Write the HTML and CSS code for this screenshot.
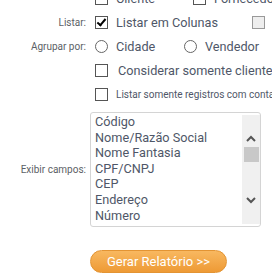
FILE: index.html
```html
<!DOCTYPE html>
<html lang="pt-BR">
<head>
    <meta charset="UTF-8">
    <title>Relatório</title>
    <link rel="stylesheet" href="styles.css">
</head>
<body>
    <div class="form">
        <div class="row row-top">
            <span class="label"></span>
            <div class="field">
                <label class="choice w-cliente"><span class="check"></span><span class="opt">Cliente</span></label>
                <label class="choice"><span class="check"></span><span class="opt">Fornecedor</span></label>
            </div>
        </div>
        <div class="row">
            <span class="label">Listar:</span>
            <div class="field">
                <label class="choice w-colunas"><span class="check checked"></span><span class="opt">Listar em Colunas</span></label>
                <label class="choice"><span class="check disabled"></span><span class="opt">Totalizar</span></label>
            </div>
        </div>
        <div class="row">
            <span class="label">Agrupar por:</span>
            <div class="field">
                <label class="choice w-cidade"><span class="radio"></span><span class="opt">Cidade</span></label>
                <label class="choice"><span class="radio"></span><span class="opt">Vendedor</span></label>
            </div>
        </div>
        <div class="row">
            <span class="label"></span>
            <div class="field">
                <label class="choice"><span class="check"></span><span class="opt opt-pad">Considerar somente clientes ativos</span></label>
            </div>
        </div>
        <div class="row">
            <span class="label"></span>
            <div class="field">
                <label class="choice"><span class="check"></span><span class="opt small">Listar somente registros com contato</span></label>
            </div>
        </div>
        <div class="row row-list">
            <span class="label">Exibir campos:</span>
            <div class="listbox">
                <ul class="items">
                    <li>Código</li>
                    <li>Nome/Razão Social</li>
                    <li>Nome Fantasia</li>
                    <li>CPF/CNPJ</li>
                    <li>CEP</li>
                    <li>Endereço</li>
                    <li>Número</li>
                </ul>
                <div class="scrollbar">
                    <svg class="arrow" width="10" height="7" viewBox="0 0 10 7"><path d="M1 6 L5 2 L9 6" fill="none" stroke="#555" stroke-width="2"/></svg>
                    <span class="thumb"></span>
                    <span class="spacer"></span>
                    <svg class="arrow" width="10" height="7" viewBox="0 0 10 7"><path d="M1 1 L5 5 L9 1" fill="none" stroke="#555" stroke-width="2"/></svg>
                </div>
            </div>
        </div>
        <div class="row row-button">
            <span class="label"></span>
            <button class="btn">Gerar Relatório &gt;&gt;</button>
        </div>
    </div>
</body>
</html>
```

FILE: styles.css
```css
body {
    margin: 0;
    background-color: #fff;
    font-family: Roboto, "DejaVu Sans Condensed", sans-serif;
    color: #4f5768;
    overflow: hidden;
    white-space: nowrap;
}
.form {
    margin-top: -13px;
}
.row {
    display: flex;
    align-items: center;
    height: 24px;
}
.row-top {
    height: 23px;
}
.label {
    width: 86px;
    flex: none;
    text-align: right;
    font-size: 10px;
    color: #5c5f66;
    margin-right: 4px;
}
.field {
    display: flex;
    align-items: center;
    padding-left: 5px;
}
.choice {
    display: flex;
    align-items: center;
    flex: none;
}
.w-cliente {
    width: 98px;
}
.w-colunas {
    width: 157px;
}
.w-cidade {
    width: 89px;
}
.check,
.radio {
    display: inline-block;
    width: 11px;
    height: 11px;
    border: 1px solid #555;
    background-color: #fff;
    flex: none;
    position: relative;
}
.radio {
    border-color: #666;
    border-radius: 50%;
}
.check.checked::after {
    content: "";
    position: absolute;
    left: 3px;
    top: 0;
    width: 3px;
    height: 7px;
    border: solid #000;
    border-width: 0 2px 2px 0;
    transform: rotate(40deg);
}
.check.disabled {
    background-color: #eee;
    border-color: #999;
}
.opt {
    margin-left: 8px;
    font-size: 12.7px;
}
.opt-pad {
    margin-left: 10px;
}
.opt.small {
    font-size: 10px;
}
.row-list {
    height: auto;
    margin-top: 6px;
}
.listbox {
    display: flex;
    width: 169px;
    height: 113px;
    border: 1px solid #d4d4d4;
    border-radius: 3px;
    overflow: hidden;
}
.items {
    flex: 1;
    list-style: none;
    margin: 0;
    padding: 1px 0 0 4px;
    font-size: 12.7px;
    line-height: 15.6px;
}
.scrollbar {
    width: 18px;
    margin: 2px 0;
    background-color: #f0f0f0;
    display: flex;
    flex-direction: column;
    align-items: center;
    padding-top: 20px;
    padding-bottom: 20px;
}
.arrow {
    flex: none;
}
.thumb {
    width: 15px;
    height: 15px;
    margin-top: 5px;
    background-color: #c8c8c8;
}
.spacer {
    flex: 1;
}
.row-button {
    height: auto;
    margin-top: 23px;
}
.btn {
    width: 137px;
    height: 23px;
    padding: 0;
    border: 1px solid #e39433;
    border-radius: 12px;
    background: linear-gradient(#f8b860, #ee9a35);
    color: #fff;
    font-family: inherit;
    font-size: 13px;
    cursor: pointer;
}
```
